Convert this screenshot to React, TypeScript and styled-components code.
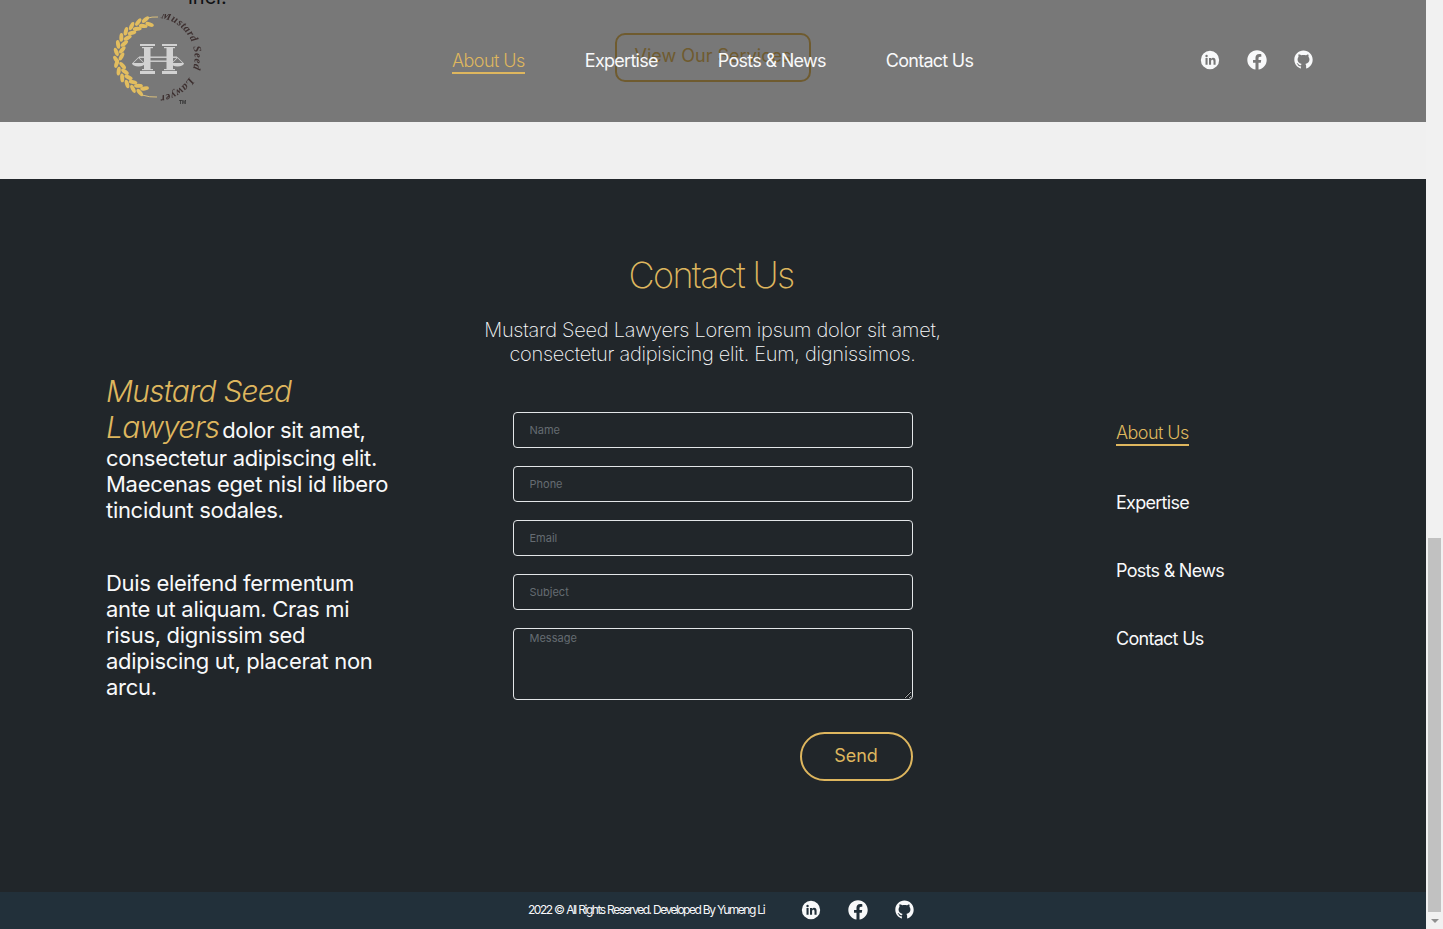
import styled, { createGlobalStyle } from "styled-components";
import { FaFacebook } from "react-icons/fa";
import { AiOutlineGithub } from "react-icons/ai";

const GOLD = "#deb65e";

const menu = ["About Us", "Expertise", "Posts & News", "Contact Us"];
const fields = ["Name", "Phone", "Email", "Subject"];

const upperLeaves = Array.from({ length: 8 }, (_, i) => 176 + i * 11.5);
const lowerLeaves = Array.from({ length: 6 }, (_, i) => 170 - i * 11.5);

const polar = (deg: number, r: number) => {
  const rad = (deg * Math.PI) / 180;
  return { x: 42.5 + r * Math.cos(rad), y: 43 + r * Math.sin(rad) };
};

const Leaf = ({ deg, r, tilt }: { deg: number; r: number; tilt: number }) => {
  const { x, y } = polar(deg, r);
  return <ellipse cx={x} cy={y} rx="4.4" ry="2" fill="#e2bd5f" transform={`rotate(${deg + tilt} ${x} ${y})`} />;
};

const Logo = () => (
  <LogoMark viewBox="0 0 92 92" width="92" height="92">
    <defs>
      <path id="logo-arc" d="M 46.4 4.1 A 39 39 0 0 1 46.4 81.9" fill="none" />
    </defs>
    {upperLeaves.map((deg) => (
      <g key={deg}>
        <Leaf deg={deg} r={38.5} tilt={62} />
        <Leaf deg={deg + 5} r={33} tilt={118} />
      </g>
    ))}
    {lowerLeaves.map((deg) => (
      <g key={deg}>
        <Leaf deg={deg} r={38.5} tilt={-62} />
        <Leaf deg={deg - 5} r={33} tilt={-118} />
      </g>
    ))}
    <path d="M34 4.5 Q 40 2.5 46 3" stroke="#d9bf7c" strokeWidth="1" fill="none" />
    <path d="M30 81 Q 38 83.5 45 83" stroke="#d9bf7c" strokeWidth="1" fill="none" />
    <g fill="#d2d2d2">
      <rect x="28" y="30" width="15" height="2" />
      <rect x="30" y="33" width="11" height="1.2" />
      <rect x="32" y="34" width="6.5" height="21" />
      <rect x="30" y="55" width="11" height="1.2" />
      <rect x="28" y="57" width="15" height="3" />
      <rect x="50" y="30" width="15" height="2" />
      <rect x="52" y="33" width="11" height="1.2" />
      <rect x="54.5" y="34" width="6.5" height="21" />
      <rect x="52" y="55" width="11" height="1.2" />
      <rect x="50" y="57" width="15" height="3" />
      <rect x="27" y="42.5" width="38" height="1.4" />
      <rect x="38" y="46.5" width="17" height="1.4" />
      <path d="M20 49h13a6.5 3.6 0 0 1-13 0zM59 49h13a6.5 3.6 0 0 1-13 0z" />
      <path d="M26.5 43l-6 6h1l5-5 5 5h1zM65.5 43l-6 6h1l5-5 5 5h1z" />
    </g>
    <LogoText>
      <textPath href="#logo-arc" startOffset="2%">Mustard</textPath>
      <textPath href="#logo-arc" startOffset="41%">Seed</textPath>
      <textPath href="#logo-arc" startOffset="68%">Lawyers</textPath>
    </LogoText>
    <LogoTm x="67" y="90">TM</LogoTm>
  </LogoMark>
);

const LinkedinIcon = () => (
  <svg viewBox="0 0 24 24" width="20" height="20" fill="currentColor">
    <path
      fillRule="evenodd"
      d="M12 1a11 11 0 1 0 0 22 11 11 0 0 0 0-22zM6.6 9.6h2.5v8H6.6zM7.85 5.8a1.45 1.45 0 1 1 0 2.9 1.45 1.45 0 0 1 0-2.9zM10.8 9.6h2.4v1.1c.5-.8 1.4-1.3 2.5-1.3 2.1 0 3 1.3 3 3.5v4.7h-2.5v-4.2c0-1.1-.4-1.8-1.4-1.8s-1.5.7-1.5 1.8v4.2h-2.5z"
    />
  </svg>
);

const Socials = ({ lift = 0 }: { lift?: number }) => (
  <SocialRow $lift={lift}>
    <SocialLink><LinkedinIcon /></SocialLink>
    <SocialLink><FaFacebook size={20} /></SocialLink>
    <SocialLink><AiOutlineGithub size={25} /></SocialLink>
  </SocialRow>
);

const App = () => {
  return (
    <Page>
      <GlobalStyle />
      <Content>
        <ServicesBand>
          <ClippedCopy>inci.</ClippedCopy>
          <ServiceBtn>View Our Services</ServiceBtn>
          <Header>
            <Logo />
            <HeaderNav>
              {menu.map((item, idx) => (
                <MenuLink key={item} $active={idx === 0}>{item}</MenuLink>
              ))}
            </HeaderNav>
            <Socials lift={3} />
          </Header>
        </ServicesBand>

        <ContactSection>
          <About>
            <AboutText>
              <BrandName>Mustard Seed Lawyers</BrandName> dolor sit amet, consectetur adipiscing elit. Maecenas eget nisl id libero tincidunt sodales.
            </AboutText>
            <AboutText>
              Duis eleifend fermentum ante ut aliquam. Cras mi risus, dignissim sed adipiscing ut, placerat non arcu.
            </AboutText>
          </About>

          <Center>
            <Title>Contact Us</Title>
            <Intro>
              Mustard Seed Lawyers Lorem ipsum dolor sit amet,<br />
              consectetur adipisicing elit. Eum, dignissimos.
            </Intro>
            <Form>
              {fields.map((name) => (
                <Field key={name} placeholder={name} />
              ))}
              <MessageField placeholder="Message" />
              <SendBtn type="button">Send</SendBtn>
            </Form>
          </Center>

          <SideNav>
            {menu.map((item, idx) => (
              <MenuLink key={item} $active={idx === 0}>{item}</MenuLink>
            ))}
          </SideNav>
        </ContactSection>

        <Footer>
          <Copyright>2022 © All Rights Reserved. Developed By Yumeng Li</Copyright>
          <Socials />
        </Footer>
      </Content>

      <Scrollbar>
        <ScrollThumb />
        <ScrollArrow />
      </Scrollbar>
    </Page>
  );
};

export default App;

const GlobalStyle = createGlobalStyle`
  html, body {
    margin: 0;
    padding: 0;
    height: 100%;
    overflow: hidden;
  }

  body {
    font-family: "Inter", "Liberation Sans", sans-serif;
  }

  * {
    box-sizing: border-box;
  }
`;

const Page = styled.div`
  display: flex;
  width: 1443px;
  height: 929px;
  overflow: hidden;
`;

const Content = styled.main`
  display: flex;
  flex-direction: column;
  width: 1426px;
  height: 929px;
`;

const ServicesBand = styled.section`
  position: relative;
  display: flex;
  flex-direction: column;
  height: 179px;
  flex-shrink: 0;
  overflow: hidden;
  background-color: #f0f0f0;
`;

const ClippedCopy = styled.p`
  margin: -15px 0 0 188px;
  font-size: 20px;
  line-height: 24px;
  color: #212529;
`;

const ServiceBtn = styled.button`
  align-self: center;
  width: 196px;
  height: 49px;
  margin-top: 24px;
  padding: 0 0 4px;
  border: 2px solid ${GOLD};
  border-radius: 10px;
  background-color: transparent;
  font-family: inherit;
  font-size: 18px;
  color: ${GOLD};
`;

const Header = styled.header`
  position: absolute;
  top: 0;
  left: 0;
  right: 0;
  display: flex;
  align-items: center;
  height: 122px;
  padding: 0 112px;
  background-color: rgba(0, 0, 0, 0.5);
`;

const LogoMark = styled.svg`
  flex-shrink: 0;
  margin-bottom: 2px;
  filter: blur(0.35px);
`;

const LogoText = styled.text`
  font-family: "Liberation Serif", serif;
  font-style: italic;
  font-weight: 700;
  font-size: 11px;
  letter-spacing: 0.4px;
  fill: #3d3030;
`;

const LogoTm = styled.text`
  font-family: "Liberation Sans", sans-serif;
  font-weight: 700;
  font-size: 5px;
  fill: #2f2f2f;
`;

const HeaderNav = styled.nav`
  display: flex;
  align-items: flex-start;
  gap: 60px;
  margin: 2px auto 0 248px;
`;

const MenuLink = styled.a<{ $active?: boolean }>`
  display: inline-block;
  border-bottom: ${({ $active }) => ($active ? `2px solid ${GOLD}` : "0")};
  font-size: 18px;
  line-height: 22px;
  letter-spacing: ${({ $active }) => ($active ? "-0.55px" : "-0.72px")};
  font-weight: ${({ $active }) => ($active ? 300 : 400)};
  color: ${({ $active }) => ($active ? GOLD : "#f8f9fa")};
`;

const SocialRow = styled.div<{ $lift: number }>`
  display: flex;
  align-items: center;
  gap: 26px;
  margin-bottom: ${({ $lift }) => $lift}px;
`;

const SocialLink = styled.a`
  display: flex;
  align-items: center;
  justify-content: center;
  width: 21px;
  height: 24px;
  color: #f8f9fa;
`;

const ContactSection = styled.section`
  display: grid;
  grid-template-columns: 286px 641px 1fr;
  align-items: center;
  height: 713px;
  flex-shrink: 0;
  padding-left: 106px;
  background-color: #21262a;
`;

const About = styled.div`
  display: flex;
  flex-direction: column;
  gap: 47px;
  margin-top: 2px;
`;

const AboutText = styled.p`
  margin: 0;
  font-size: 22px;
  line-height: 26px;
  letter-spacing: -0.3px;
  color: #f8f9fa;
`;

const BrandName = styled.span`
  margin-right: -3px;
  font-size: 30px;
  line-height: 36px;
  font-style: italic;
  font-weight: 300;
  letter-spacing: -0.8px;
  color: ${GOLD};
`;

const Center = styled.div`
  display: flex;
  flex-direction: column;
  align-items: center;
  padding: 75px 0 111px;
`;

const Title = styled.h2`
  margin: 0 0 21px;
  padding-right: 3px;
  font-size: 36px;
  line-height: 43px;
  font-weight: 200;
  letter-spacing: -1.65px;
  color: ${GOLD};
`;

const Intro = styled.p`
  margin: 0 0 46px;
  font-size: 20px;
  line-height: 24px;
  font-weight: 200;
  letter-spacing: -0.27px;
  text-align: center;
  color: #f8f9fa;
`;

const Form = styled.form`
  display: flex;
  flex-direction: column;
  gap: 18px;
  width: 400px;
`;

const Field = styled.input`
  display: block;
  width: 100%;
  height: 36px;
  padding: 0 16px 1px;
  border: 1px solid #e3e6e8;
  border-radius: 4px;
  outline: none;
  background-color: transparent;
  font-family: inherit;
  font-size: 11px;
  color: #f8f9fa;

  &::placeholder {
    color: #656c72;
    opacity: 1;
  }
`;

const MessageField = styled.textarea`
  display: block;
  width: 100%;
  height: 72px;
  padding: 3px 16px;
  border: 1px solid #e3e6e8;
  border-radius: 4px;
  outline: none;
  background-color: transparent;
  font-family: inherit;
  font-size: 11px;
  line-height: 12px;
  color: #f8f9fa;

  &::placeholder {
    color: #656c72;
    opacity: 1;
  }
`;

const SendBtn = styled.button`
  align-self: flex-end;
  width: 113px;
  height: 49px;
  margin-top: 14px;
  padding: 0 0 3px;
  border: 2px solid ${GOLD};
  border-radius: 25px;
  background-color: transparent;
  font-family: inherit;
  font-size: 18px;
  color: ${GOLD};
`;

const SideNav = styled.nav`
  display: flex;
  flex-direction: column;
  align-items: flex-start;
  gap: 46px;
  padding-left: 83px;
`;

const Footer = styled.footer`
  display: flex;
  align-items: center;
  gap: 36px;
  flex: 1;
  padding: 0 0 2px 528px;
  background-color: #22303a;
`;

const Copyright = styled.p`
  margin: 0;
  font-size: 12px;
  letter-spacing: -1.5px;
  word-spacing: 0.7px;
  color: #f8f9fa;
`;

const Scrollbar = styled.aside`
  position: relative;
  width: 17px;
  height: 929px;
  background-color: #f1f1f1;
`;

const ScrollThumb = styled.div`
  position: absolute;
  top: 538px;
  left: 2px;
  width: 13px;
  height: 374px;
  background-color: #c1c1c1;
`;

const ScrollArrow = styled.div`
  position: absolute;
  bottom: 6px;
  left: 5px;
  width: 0;
  height: 0;
  border-left: 4px solid transparent;
  border-right: 4px solid transparent;
  border-top: 4px solid #8f8f8f;
`;
